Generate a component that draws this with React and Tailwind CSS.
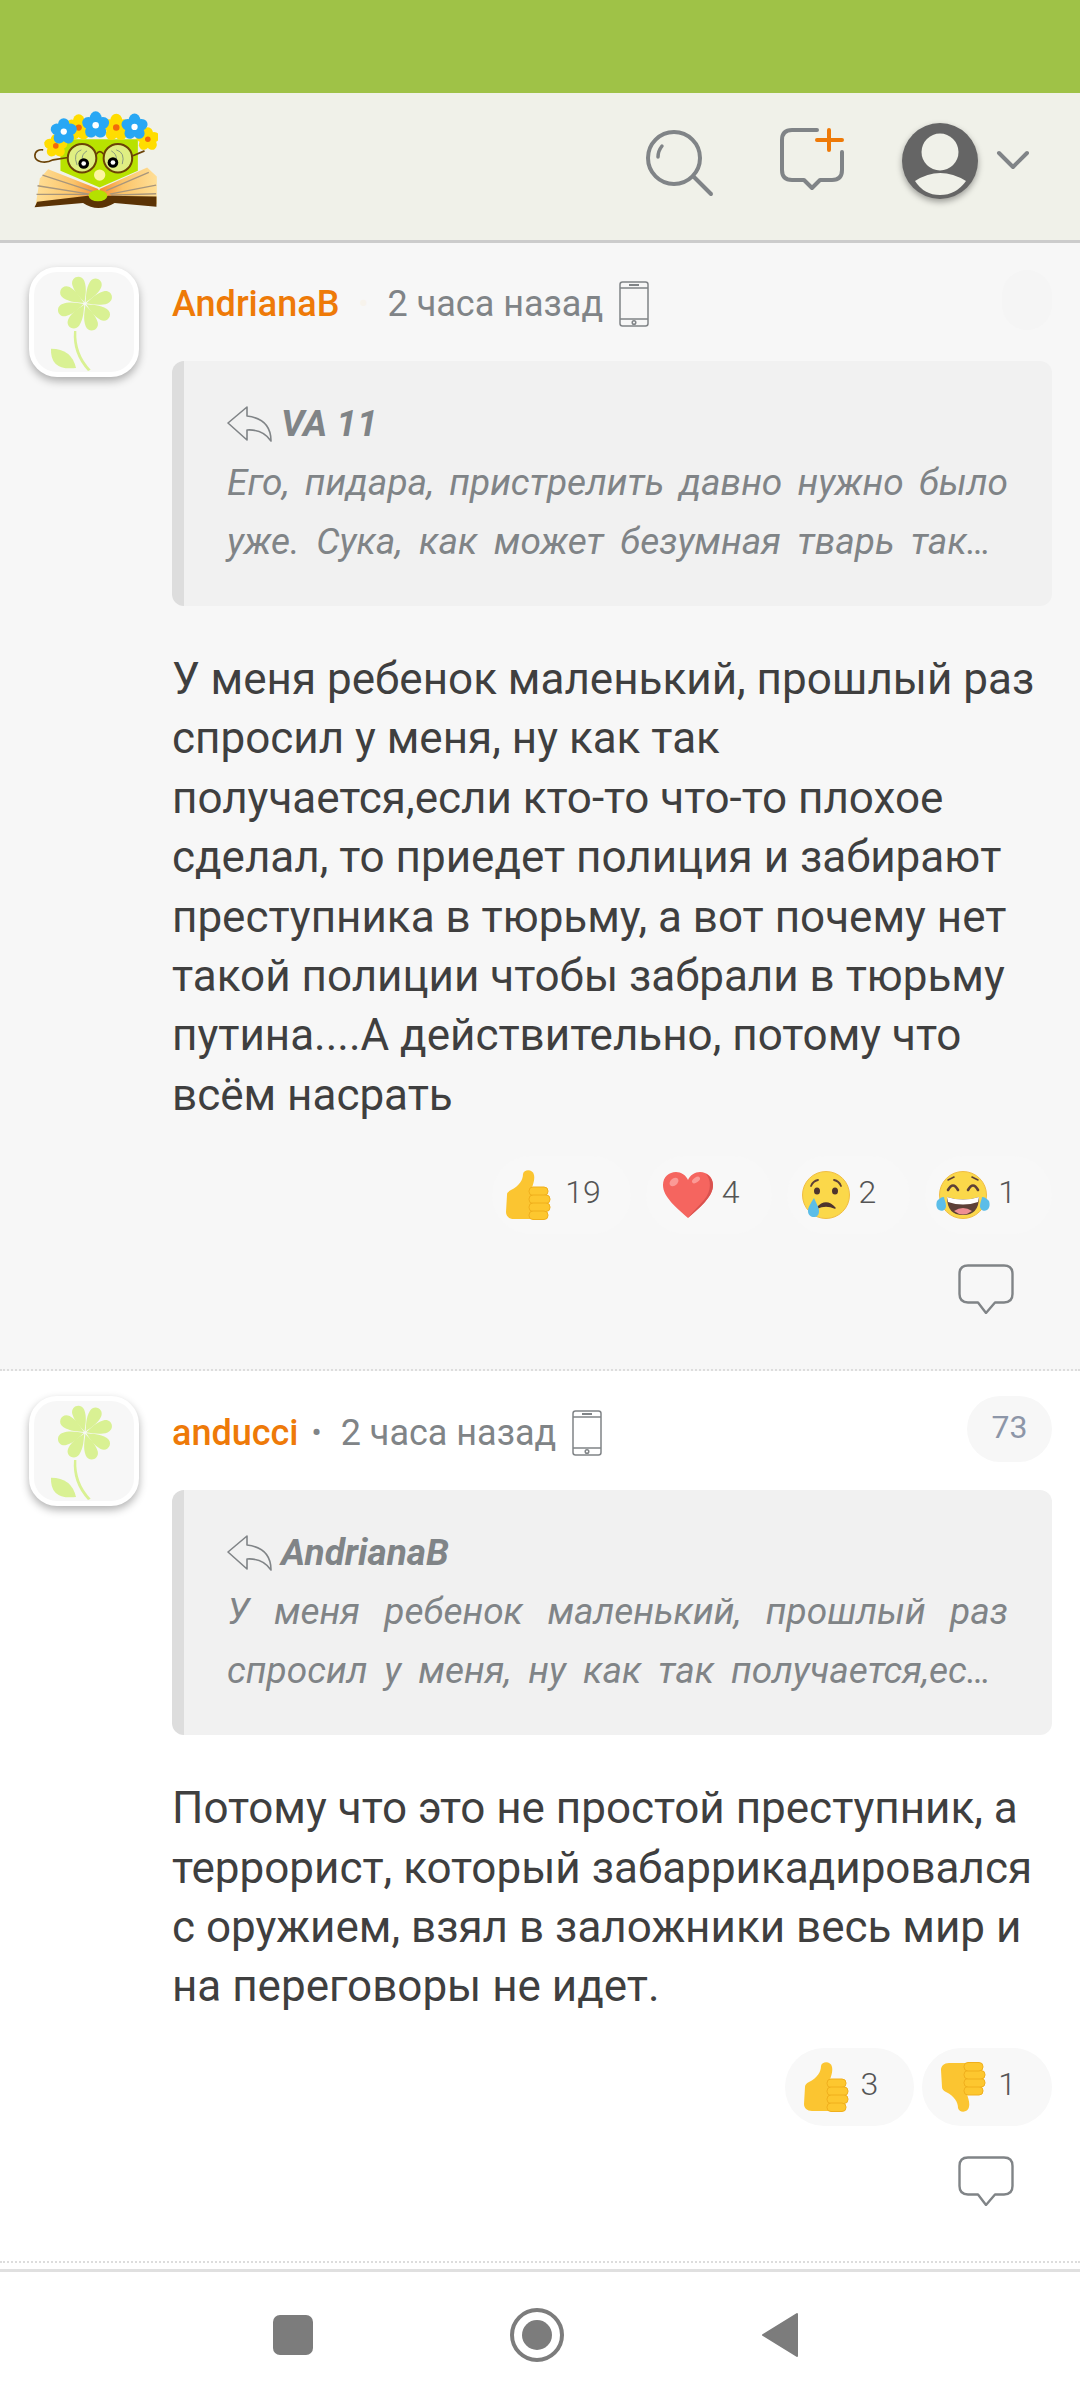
import React from 'react';

const flowers = [
    { x: 168, y: 170, c: '#ffdd00', d: '#f26a0a', s: 1.2 },
    { x: 445, y: 150, c: '#ffdd00', d: '#f26a0a', s: 1.2 },
    { x: 237, y: 115, c: '#ffdd00', d: '#f26a0a', s: 1.35 },
    { x: 350, y: 115, c: '#ffdd00', d: '#f26a0a', s: 1.4 },
    { x: 192, y: 127, c: '#28a7f4', d: '#ffffff', s: 1.35 },
    { x: 288, y: 108, c: '#28a7f4', d: '#ffffff', s: 1.4 },
    { x: 405, y: 113, c: '#28a7f4', d: '#ffffff', s: 1.35 },
];

function Logo() {
    return (
        <svg viewBox="100 65 375 295" className="w-[125px] h-[98px] shrink-0">
            <defs>
                <linearGradient id="pageL" x1="0" x2="1" y1="0" y2="0">
                    <stop offset="0" stopColor="#ffdf96" />
                    <stop offset="0.6" stopColor="#fbc46a" />
                    <stop offset="1" stopColor="#f58a32" />
                </linearGradient>
                <linearGradient id="pageR" x1="1" x2="0" y1="0" y2="0">
                    <stop offset="0" stopColor="#ffdf96" />
                    <stop offset="0.6" stopColor="#fbc46a" />
                    <stop offset="1" stopColor="#f58a32" />
                </linearGradient>
            </defs>
            <path d="M182 150H415V245L300 295L182 245Z" fill="#b8e200" />
            <path d="M108 345L120 268L145 240L296 300V335Z" fill="url(#pageL)" />
            <path d="M472 345V262L443 235L300 300V335Z" fill="url(#pageR)" />
            <g stroke="#a8967c" strokeWidth="4" fill="none">
                <path d="M128 258L280 308M113 290L270 315M110 316H265" />
                <path d="M448 250L320 305M470 288L330 315M470 314L335 318" />
            </g>
            <path d="M104 355L112 338L265 320Q295 345 325 320L471 322V353L345 342Q295 372 250 342Z" fill="#5b3305" />
            <ellipse cx="295" cy="320" rx="28" ry="17" fill="#b5e000" />
            <circle cx="300" cy="258" r="17" fill="#fdf5a0" />
            <path d="M205 205L160 212C135 225 105 218 105 200C105 185 118 180 130 182" stroke="#6a4206" strokeWidth="5" fill="none" />
            <path d="M400 200L435 185" stroke="#6a4206" strokeWidth="5" />
            {flowers.map((f, i) => (
                <g key={i} transform={`translate(${f.x} ${f.y}) scale(${f.s})`}>
                    {[0, 72, 144, 216, 288].map(a => (
                        <ellipse key={a} cx="0" cy="-15" rx="13" ry="15" fill={f.c} transform={`rotate(${a})`} />
                    ))}
                    <circle r="7" fill={f.d} />
                </g>
            ))}
            <circle cx="247" cy="207" r="43" fill="#dfee82" stroke="#6a4206" strokeWidth="6" />
            <circle cx="355" cy="207" r="43" fill="#dfee82" stroke="#6a4206" strokeWidth="6" />
            <path d="M290 195Q300 180 312 195" stroke="#6a4206" strokeWidth="5" fill="none" />
            <g stroke="#8a9a80" strokeWidth="3" fill="none">
                <path d="M245 182Q218 190 232 228M262 185Q245 195 248 212" />
                <path d="M350 182Q378 190 368 225M335 185Q352 195 350 210" />
            </g>
            <circle cx="252" cy="223" r="16" fill="#000" />
            <circle cx="252" cy="223" r="7" fill="#fff" />
            <circle cx="340" cy="220" r="16" fill="#000" />
            <circle cx="340" cy="220" r="7" fill="#fff" />
        </svg>
    );
}

function SearchIcon() {
    return (
        <svg width="72" height="72" viewBox="0 0 72 72" fill="none" stroke="#808487" strokeLinecap="round" className="shrink-0 mt-[5px]">
            <circle cx="31" cy="31" r="26" strokeWidth="4" />
            <path d="M51 50L68 67" strokeWidth="4" />
            <path d="M15 30Q15 24 19 19" strokeWidth="3.5" />
        </svg>
    );
}

function NewCommentIcon() {
    return (
        <svg width="66" height="66" viewBox="0 0 66 66" fill="none" strokeLinecap="round" className="shrink-0">
            <path d="M38 3H13Q3 3 3 13V43Q3 53 13 53H25L33 61L41 53H53Q63 53 63 43V25" stroke="#808487" strokeWidth="4" strokeLinejoin="round" />
            <path d="M50 3V23M38 13H63" stroke="#ee7a08" strokeWidth="4" />
        </svg>
    );
}

function ProfileIcon() {
    return (
        <div className="w-[76px] h-[76px] rounded-full bg-[#656565] shadow-[0_3px_6px_rgba(0,0,0,0.35)] overflow-hidden shrink-0 mt-[2px]">
            <svg viewBox="0 0 76 76" className="w-full h-full">
                <circle cx="38" cy="29" r="18.5" fill="#f0f1e9" />
                <path d="M13 58Q38 42 64 58Q54 72 38 72Q22 72 13 58Z" fill="#f0f1e9" />
            </svg>
        </div>
    );
}

function Avatar() {
    return (
        <div className="w-[110px] h-[110px] rounded-[28px] border-[5px] border-white bg-[#f7f7f7] shadow-[0_4px_8px_rgba(0,0,0,0.3)] shrink-0 overflow-hidden">
            <svg viewBox="103 545 298 300" className="w-full h-full">
                {[-18, 29, 73, 120, 162, 211, 253, 301].map(a => (
                    <path key={a} d="M255 636C248 620 235 600 236 575C238 550 272 550 274 575C275 600 262 620 255 636Z" fill="#d9f193" transform={`rotate(${a} 255 640)`} />
                ))}
                <path d="M222 722Q216 790 264 842L272 838Q226 790 229 722Z" fill="#d9f193" />
                <path d="M153 775Q215 775 228 833Q150 842 153 775Z" fill="#d9f193" />
            </svg>
        </div>
    );
}

function PhoneIcon() {
    return (
        <svg width="30" height="46" viewBox="0 0 30 46" fill="none" stroke="#808487" strokeWidth="1.5" className="shrink-0">
            <rect x="1" y="1" width="28" height="44" rx="2.5" />
            <path d="M1 7H29M1 38H29" />
            <path d="M10 4H20" strokeWidth="2" />
            <circle cx="15" cy="41.5" r="1.8" />
        </svg>
    );
}

function ReplyIcon() {
    return (
        <svg width="46" height="36" viewBox="0 0 46 36" fill="none" stroke="#808487" strokeWidth="1.6" strokeLinejoin="round" className="shrink-0 mr-[8px]">
            <path d="M20 1L1 17L20 34V24Q36 23 44 35Q44 13 20 10Z" />
        </svg>
    );
}

function ThumbUp({ down }) {
    return (
        <svg width="46" height="50" viewBox="0 0 46 50" className={down ? '-scale-y-100' : ''}>
            <path d="M2 25Q2 22 6 20C14 16 18 10 18 4C19 -1 28 -1 29 5C30 10 28 14 27 18L30 49H9C4 49 1 46 1 42Z" fill="#fbc531" />
            {[17, 25, 33, 41].map(y => (
                <rect key={y} x="24" y={y} width={y === 17 || y === 41 ? 19 : 21} height="8.5" rx="4" fill="#fdc72f" stroke="#f0af1c" strokeWidth="1" />
            ))}
        </svg>
    );
}

function Heart() {
    return (
        <svg width="52" height="48" viewBox="0 0 52 48">
            <path d="M26 47C14 36 1 26 1 14C1 6 7 1 14 1C19 1 24 4 26 9C28 4 33 1 38 1C45 1 51 6 51 14C51 26 38 36 26 47Z" fill="#f5655f" />
            <path d="M44 3C49 8 50 20 42 29C36 36 30 41 26 47C38 36 51 26 51 14C51 9 48 5 44 3Z" fill="#d9524f" />
            <ellipse cx="12" cy="11" rx="5" ry="3.5" fill="#fb9a96" transform="rotate(-40 12 11)" />
            <ellipse cx="34" cy="9" rx="4.5" ry="2.5" fill="#fb9a96" transform="rotate(-35 34 9)" />
        </svg>
    );
}

function CryFace() {
    return (
        <svg width="50" height="48" viewBox="0 0 50 48">
            <circle cx="25" cy="24" r="23.500" fill="#fbd84a" stroke="#f0bd45" strokeWidth="1" />
            <path d="M10 15Q12 10 17 9M40 15Q38 10 33 9" stroke="#5d4037" strokeWidth="1.8" fill="none" strokeLinecap="round" />
            <ellipse cx="16" cy="20" rx="3" ry="3.5" fill="#4e342e" />
            <ellipse cx="34" cy="20" rx="3" ry="3.5" fill="#4e342e" />
            <path d="M16 37Q25 27 34 37Q25 33 16 37Z" fill="#4e342e" stroke="#4e342e" strokeWidth="1.5" strokeLinejoin="round" />
            <path d="M13 27C10 32 7 36 7 40C7 44 10 46 13 46C16 46 18 44 18 40C18 36 15 32 13 27Z" fill="#5bbde8" />
        </svg>
    );
}

function JoyFace() {
    return (
        <svg width="54" height="48" viewBox="0 0 54 48">
            <circle cx="27" cy="24" r="23.500" fill="#fbd84a" stroke="#f0bd45" strokeWidth="1" />
            <path d="M12 19Q17 10 22 19M32 19Q37 10 42 19" stroke="#5d4037" strokeWidth="2.6" fill="none" strokeLinecap="round" />
            <path d="M12 9L18 6M42 9L36 6" stroke="#5d4037" strokeWidth="1.6" strokeLinecap="round" />
            <path d="M11 26Q27 31 43 26Q43 44 27 44Q11 44 11 26Z" fill="#5d4037" />
            <path d="M11 26Q27 31 43 26L42 31Q27 36 12 31Z" fill="#fff" />
            <path d="M18 40Q27 34 36 40Q27 47 18 40Z" fill="#ef8f93" />
            <path d="M1 30C0 33 0 37 3 39C6 41 10 39 10 35C10 31 8 28 8 26C5 26 3 28 1 30Z" fill="#5bbde8" />
            <path d="M53 30C54 33 54 37 51 39C48 41 44 39 44 35C44 31 46 28 46 26C49 26 51 28 53 30Z" fill="#5bbde8" />
        </svg>
    );
}

function CommentIcon() {
    return (
        <svg width="56" height="50" viewBox="0 0 56 50" fill="none" stroke="#808487" strokeWidth="2.4" strokeLinejoin="round" className="self-end mr-[38px] mt-[30px] shrink-0">
            <path d="M10 1.5H46Q54.500 1.500 54.500 10V30Q54.500 38.500 46 38.500H37L28 49L20 38.500H10Q1.500 38.500 1.500 30V10Q1.500 1.500 10 1.500Z" />
        </svg>
    );
}

function Reaction({ icon, count, spacing }) {
    return (
        <div className={`flex items-center h-[78px] rounded-full bg-[#f8f8f8] ${spacing}`}>
            {icon}
            <span className="text-[32px] text-[#555555] font-light leading-none -mt-[6px]">{count}</span>
        </div>
    );
}

function Comment({ name, dot, score, quoteName, line1, line2, bg, children, reactions, gap, pb }) {
    return (
        <div className={`flex pl-[29px] pr-[28px] border-b-2 border-dotted border-[#dddddd] ${bg} ${pb}`}>
            <Avatar />
            <div className="flex flex-col ml-[33px] flex-1 min-w-0">
                <div className="flex items-center h-[70px] text-[36px]">
                    <span className="font-medium text-[#ee7a08] mt-[3px]">{name}</span>
                    <span className={`text-[30px] mt-[3px] ${dot}`}>•</span>
                    <span className="text-[#808487] mt-[3px]">2 часа назад</span>
                    <span className="ml-[16px] mt-[3px]"><PhoneIcon /></span>
                    {score ? (
                        <div className="ml-auto self-start rounded-full w-[85px] h-[66px] flex items-center justify-center text-[32px] text-[#8d96a8] bg-[#f7f7f7] pb-[4px]">
                            {score}
                        </div>
                    ) : (
                        <div className="ml-auto self-start rounded-full w-[50px] h-[60px] mt-[3px] bg-[#f5f5f5]" />
                    )}
                </div>
                <div className="mt-[24px] h-[245px] rounded-[12px] bg-[#f1f1f1] border-l-[12px] border-[#dddddd] pl-[43px] pr-[44px] pt-[33px] text-[37px] italic leading-[59px] text-[#808487]">
                    <div className="flex items-center font-bold"><ReplyIcon />{quoteName}</div>
                    <div className="[text-align:justify] [text-align-last:justify] whitespace-nowrap">{line1}</div>
                    <div className="[text-align:justify] [text-align-last:justify] whitespace-nowrap mr-[17px]">{line2}</div>
                </div>
                <div className="mt-[44px] text-[44px] leading-[59.4px] text-[#3f3f3f]">{children}</div>
                <div className={`flex justify-end mt-[31px] ${gap}`}>{reactions}</div>
                <CommentIcon />
            </div>
        </div>
    );
}

export default function App() {
    return (
        <div className="w-[1080px] h-[2400px] flex flex-col bg-white overflow-hidden font-['Roboto',sans-serif]">
            <div className="h-[93px] bg-[#9fc247] shrink-0" />

            {/* header */}
            <div className="h-[150px] shrink-0 flex items-center pl-[33px] pr-[50px] pb-[13px] bg-[#f0f1e9] border-b-[3px] border-[#cccccc]">
                <Logo />
                <div className="ml-auto flex items-center">
                    <SearchIcon />
                    <div className="ml-[64px]"><NewCommentIcon /></div>
                    <div className="ml-[57px]"><ProfileIcon /></div>
                    <svg width="34" height="20" viewBox="0 0 34 20" fill="none" stroke="#808487" strokeWidth="4" strokeLinecap="round" strokeLinejoin="round" className="ml-[18px]">
                        <path d="M3 3L17 17L31 3" />
                    </svg>
                </div>
            </div>

            <Comment
                bg="bg-[#f7f7f7] pt-[24px]"
                pb="pb-[55px]"
                gap="gap-[15px]"
                name="AndrianaB"
                dot="mx-[19px] text-[#f7f3ec]"
                quoteName="VA 11"
                line1="Его, пидара, пристрелить давно нужно было"
                line2="уже. Сука, как может безумная тварь так…"
                reactions={
                    <>
                        <Reaction spacing="pl-[13px] pr-[30px] gap-[14px]" icon={<ThumbUp />} count="19" />
                        <Reaction spacing="pl-[16px] pr-[32px] gap-[8px]" icon={<Heart />} count="4" />
                        <Reaction spacing="pl-[14px] pr-[34px] gap-[8px]" icon={<CryFace />} count="2" />
                        <Reaction spacing="pl-[11px] pr-[36px] gap-[8px]" icon={<JoyFace />} count="1" />
                    </>
                }
            >
                У меня ребенок маленький, прошлый раз спросил у меня, ну как так получается,если кто-то что-то плохое сделал, то приедет полиция и забирают преступника в тюрьму, а вот почему нет такой полиции чтобы забрали в тюрьму путина....А действительно, потому что всём насрать
            </Comment>

            <Comment
                bg="bg-white pt-[25px]"
                pb="pb-[55px]"
                gap="gap-[8px]"
                name="anducci"
                dot="ml-[13px] mr-[19px] text-[#808487]"
                score="73"
                quoteName="AndrianaB"
                line1="У меня ребенок маленький, прошлый раз"
                line2="спросил у меня, ну как так получается,ес…"
                reactions={
                    <>
                        <Reaction spacing="pl-[18px] pr-[36px] gap-[12px]" icon={<ThumbUp />} count="3" />
                        <Reaction spacing="pl-[18px] pr-[36px] gap-[12px]" icon={<ThumbUp down />} count="1" />
                    </>
                }
            >
                Потому что это не простой преступник, а террорист, который забаррикадировался с оружием, взял в заложники весь мир и на переговоры не идет.
            </Comment>

            {/* bottom nav */}
            <div className="mt-[6px] flex-1 border-t-[3px] border-[#e0e0e0] bg-white flex items-center justify-center gap-[197px] pr-[8px] pb-[2px]">
                <div className="w-[40px] h-[40px] rounded-[7px] bg-[#7c7c7c]" />
                <svg width="54" height="54" viewBox="0 0 54 54">
                    <circle cx="27" cy="27" r="25" fill="none" stroke="#7c7c7c" strokeWidth="4" />
                    <circle cx="27" cy="27" r="15" fill="#7c7c7c" />
                </svg>
                <svg width="38" height="46" viewBox="0 0 38 46">
                    <path d="M2 23L36 2V44Z" fill="#7c7c7c" stroke="#7c7c7c" strokeWidth="2" strokeLinejoin="round" />
                </svg>
            </div>
        </div>
    );
}
